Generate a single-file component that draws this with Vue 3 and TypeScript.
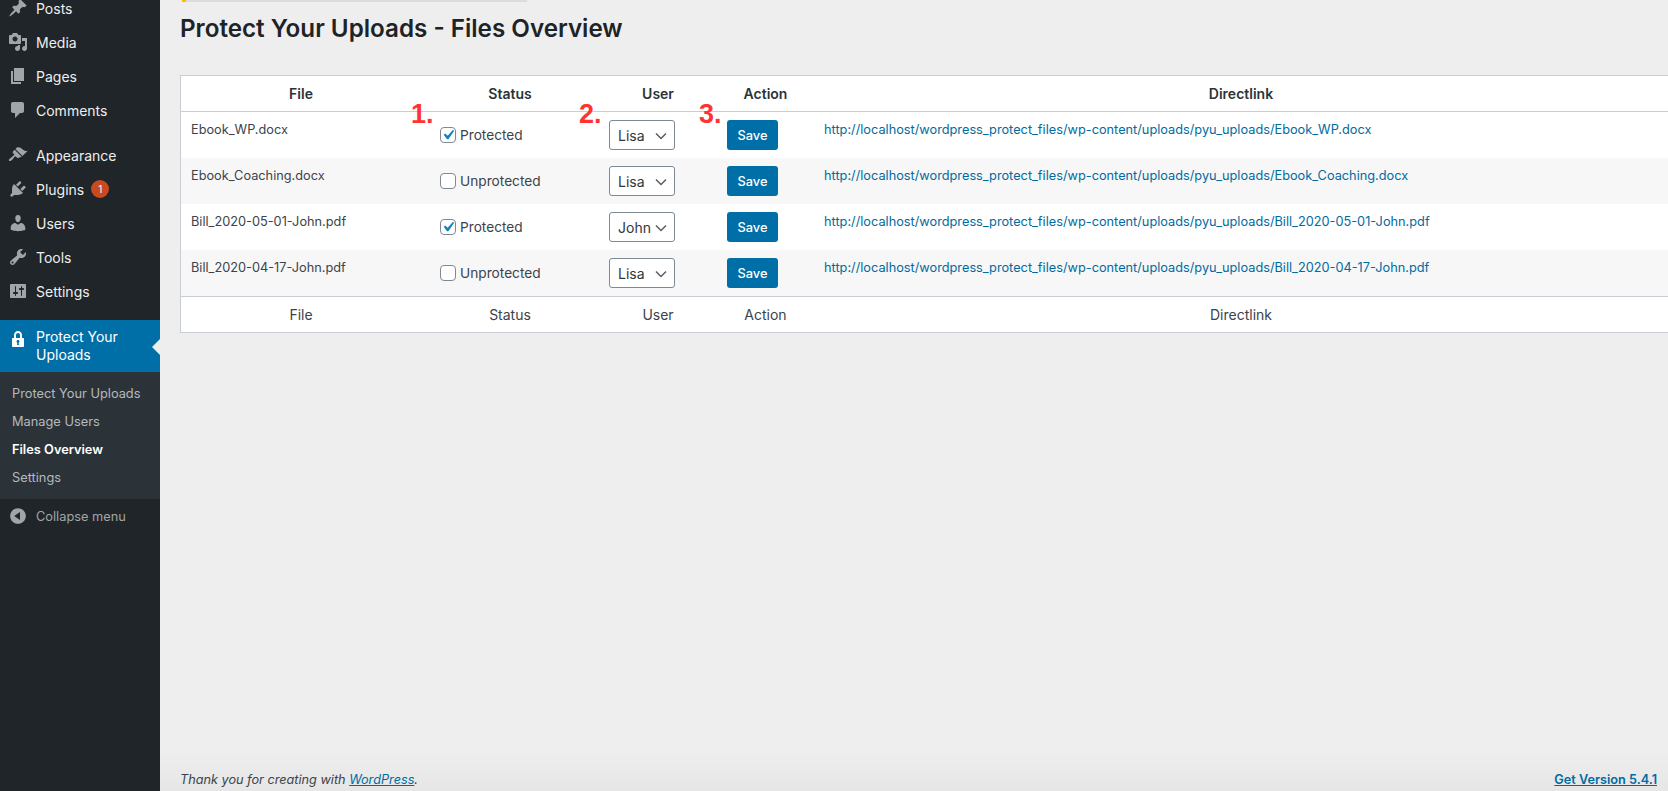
<template>
  <div class="page">
    <aside class="sidebar">
      <ul class="menu">
        <li v-for="item in topItems" :key="item.label" class="menu-item" :class="{ gap: item.gap }">
          <svg class="dash" viewBox="0 0 20 20"><path :d="item.icon" /></svg>
          <span>{{ item.label }}</span>
          <span v-if="item.badge" class="badge">{{ item.badge }}</span>
        </li>
      </ul>
      <div class="current">
        <svg class="dash" viewBox="0 0 20 20"><path :d="lockIcon" /></svg>
        <span>Protect Your Uploads</span>
      </div>
      <ul class="submenu">
        <li v-for="sub in subItems" :key="sub" :class="{ on: sub === 'Files Overview' }">{{ sub }}</li>
      </ul>
      <div class="collapse">
        <svg class="dash" viewBox="0 0 20 20"><path :d="collapseIcon" /></svg>
        <span>Collapse menu</span>
      </div>
    </aside>

    <main class="content">
      <div class="notice"></div>
      <h1>Protect Your Uploads - Files Overview</h1>
      <table class="files">
        <colgroup>
          <col class="c-file" />
          <col class="c-status" />
          <col class="c-user" />
          <col class="c-action" />
          <col />
        </colgroup>
        <thead>
          <tr>
            <th v-for="h in headers" :key="h">{{ h }}</th>
          </tr>
        </thead>
        <tbody>
          <tr v-for="(row, i) in rows" :key="row.file">
            <td>{{ row.file }}</td>
            <td class="status">
              <span v-if="i === 0" class="mark">1.</span>
              <label class="check">
                <span class="box">
                  <svg v-if="row.isProtected" viewBox="0 0 20 20"><path d="M14.83 4.89l1.34.94-5.81 8.38H9.02L5.78 9.67l1.34-1.25 2.57 2.4z" /></svg>
                </span>
                {{ row.isProtected ? 'Protected' : 'Unprotected' }}
              </label>
            </td>
            <td class="user">
              <span v-if="i === 0" class="mark">2.</span>
              <div class="select">
                <select :value="row.user">
                  <option>Lisa</option>
                  <option>John</option>
                </select>
                <svg viewBox="0 0 12 8"><path d="M1 1.5L6 6.5l5-5" /></svg>
              </div>
            </td>
            <td class="action">
              <span v-if="i === 0" class="mark">3.</span>
              <button type="button">Save</button>
            </td>
            <td><a href="#">{{ baseUrl + row.file }}</a></td>
          </tr>
        </tbody>
        <tfoot>
          <tr>
            <th v-for="h in headers" :key="h">{{ h }}</th>
          </tr>
        </tfoot>
      </table>
      <footer class="foot">
        <span class="thanks">Thank you for creating with <a href="#">WordPress</a>.</span>
        <a class="version" href="#">Get Version 5.4.1</a>
      </footer>
    </main>
  </div>
</template>

<script setup lang="ts">
interface MenuItem {
  label: string;
  icon: string;
  gap?: boolean;
  badge?: string;
}

const topItems: MenuItem[] = [
  { label: 'Posts', icon: 'M10.44 3.02l1.82-1.82 6.36 6.35-1.83 1.82c-1.05-.68-2.48-.57-3.41.36l-.75.75c-.92.93-1.04 2.35-.35 3.41l-1.83 1.82-2.41-2.41-2.8 2.79c-.42.42-3.38 2.71-3.8 2.29s1.86-3.39 2.28-3.81l2.79-2.79L4.1 9.36l1.83-1.82c1.05.69 2.48.57 3.4-.36l.75-.75c.93-.92 1.05-2.35.36-3.41z' },
  { label: 'Media', icon: 'M13 11V4c0-.55-.45-1-1-1h-1.67L9 1H5L3.67 3H2c-.55 0-1 .45-1 1v7c0 .55.45 1 1 1h10c.55 0 1-.45 1-1zM7 4.5c1.38 0 2.5 1.12 2.5 2.5S8.38 9.5 7 9.5 4.5 8.38 4.5 7 5.62 4.5 7 4.5zM14 6h5v10.5c0 1.38-1.12 2.5-2.5 2.5S14 17.88 14 16.5s1.12-2.5 2.5-2.5c.17 0 .34.02.5.05V9h-3V6zm-4 8.05V13h2v3.5c0 1.38-1.12 2.5-2.5 2.5S7 17.88 7 16.5 8.12 14 9.5 14c.17 0 .34.02.5.05z' },
  { label: 'Pages', icon: 'M6 15V2h10v13H6zm-1 1h8v2H3V5h2v11z' },
  { label: 'Comments', icon: 'M5 2h9c1.1 0 2 .9 2 2v7c0 1.1-.9 2-2 2h-2l-5 5v-5H5c-1.1 0-2-.9-2-2V4c0-1.1.9-2 2-2z' },
  { label: 'Appearance', gap: true, icon: 'M14.48 11.06L7.41 3.99l1.5-1.5c.5-.56 2.3-.47 3.51.32 1.21.8 1.43 1.28 2.91 2.1 1.18.64 2.45 1.26 4.45.85zm-.71.71L6.7 4.7 4.93 6.47c-.39.39-.39 1.02 0 1.41l1.06 1.06c.39.39.39 1.03 0 1.42-.6.6-1.43 1.11-2.21 1.69-.35.26-.7.53-1.01.84C1.43 13.23.4 14.85 1.02 15.75c.45.67 2.38-.03 3.11-.73.31-.31.58-.66.83-1.02.57-.79 1.08-1.62 1.69-2.23.39-.39 1.02-.39 1.41 0l1.06 1.06c.39.39 1.02.39 1.41 0z' },
  { label: 'Plugins', badge: '1', icon: 'M13.11 4.36L9.87 7.6 8 5.73l3.24-3.24c.35-.34 1.05-.2 1.56.32.52.51.66 1.21.31 1.55zm-8 1.77l.91-1.12 9.01 9.01-1.19.84c-.71.71-2.63 1.16-3.82 1.16H6.14L4.9 17.26c-.59.59-1.54.59-2.12 0-.59-.58-.59-1.53 0-2.12l1.24-1.24v-3.88c0-1.13.4-3.19 1.09-3.89zm7.26 3.97l3.24-3.24c.34-.35 1.04-.21 1.55.31.52.51.66 1.21.31 1.55l-3.24 3.25z' },
  { label: 'Users', icon: 'M10 9.25c-2.27 0-2.73-3.44-2.73-3.44C7 4.02 7.82 2 9.97 2c2.16 0 2.98 2.02 2.71 3.81 0 0-.41 3.44-2.68 3.44zm0 2.57L12.72 10c2.39 0 4.52 2.33 4.52 4.53v2.49s-3.65 1.13-7.24 1.13c-3.65 0-7.24-1.13-7.24-1.13v-2.49c0-2.25 1.94-4.48 4.47-4.48z' },
  { label: 'Tools', icon: 'M16.68 9.77c-1.34 1.34-3.3 1.67-4.95.99l-5.41 6.52c-.99.99-2.59.99-3.58 0s-.99-2.59 0-3.57l6.52-5.42c-.68-1.65-.35-3.61.99-4.95 1.28-1.28 3.12-1.62 4.72-1.06l-2.89 2.89 2.82 2.82 2.86-2.87c.53 1.58.18 3.39-1.08 4.65zM3.81 16.21c.4.39 1.04.39 1.43 0 .4-.4.4-1.04 0-1.43-.39-.4-1.03-.4-1.43 0-.39.39-.39 1.03 0 1.43z' },
  { label: 'Settings', icon: 'M18 16V4c0-.55-.45-1-1-1H3c-.55 0-1 .45-1 1v12c0 .55.45 1 1 1h14c.55 0 1-.45 1-1zM8 11h1c.55 0 1 .45 1 1s-.45 1-1 1H8v1.5c0 .28-.22.5-.5.5s-.5-.22-.5-.5V13H6c-.55 0-1-.45-1-1s.45-1 1-1h1V5.5c0-.28.22-.5.5-.5s.5.22.5.5V11zm5-2h-1c-.55 0-1-.45-1-1s.45-1 1-1h1V5.5c0-.28.22-.5.5-.5s.5.22.5.5V7h1c.55 0 1 .45 1 1s-.45 1-1 1h-1v5.5c0 .28-.22.5-.5.5s-.5-.22-.5-.5V9z' },
];

const lockIcon = 'M14 9h1c.55 0 1 .45 1 1v7c0 .55-.45 1-1 1H5c-.55 0-1-.45-1-1v-7c0-.55.45-1 1-1h1V6c0-2.21 1.79-4 4-4s4 1.79 4 4v3zm-2 0V6c0-1.1-.9-2-2-2s-2 .9-2 2v3h4zm-1 7l-.36-2.15c.51-.24.86-.75.86-1.35 0-.83-.67-1.5-1.5-1.5s-1.5.67-1.5 1.5c0 .6.35 1.11.86 1.35L9 16h2z';
const collapseIcon = 'M10 2.16c4.33 0 7.84 3.51 7.84 7.84s-3.51 7.84-7.84 7.84S2.16 14.33 2.16 10 5.71 2.16 10 2.16zm2 11.72V6.12L6.18 9.97z';

const subItems = ['Protect Your Uploads', 'Manage Users', 'Files Overview', 'Settings'];
const headers = ['File', 'Status', 'User', 'Action', 'Directlink'];
const baseUrl = 'http://localhost/wordpress_protect_files/wp-content/uploads/pyu_uploads/';

const rows = [
  { file: 'Ebook_WP.docx', isProtected: true, user: 'Lisa' },
  { file: 'Ebook_Coaching.docx', isProtected: false, user: 'Lisa' },
  { file: 'Bill_2020-05-01-John.pdf', isProtected: true, user: 'John' },
  { file: 'Bill_2020-04-17-John.pdf', isProtected: false, user: 'Lisa' },
];
</script>

<style>
html,
body {
  margin: 0;
  overflow: hidden;
  background: #eeeeee;
}
</style>

<style scoped>
.page {
  display: flex;
  height: 791px;
  overflow: hidden;
  font-family: Inter, "Liberation Sans", sans-serif;
  color: #3c434a;
}

.sidebar {
  flex: 0 0 160px;
  background: #1f2529;
  color: #eeeeee;
  font-size: 14px;
}

.menu,
.submenu {
  list-style: none;
  margin: 0;
  padding: 0;
}

.menu {
  margin-top: -9px;
}

.menu-item {
  display: flex;
  align-items: center;
  height: 34px;
}

.menu-item.gap {
  margin-top: 11px;
}

.dash {
  flex: none;
  width: 20px;
  height: 20px;
  margin: 0 8px;
  fill: #a0a5aa;
}

.badge {
  width: 18px;
  height: 18px;
  margin-left: 7px;
  border-radius: 50%;
  background: #ca4a1f;
  color: #fff;
  font-size: 10px;
  line-height: 18px;
  text-align: center;
}

.current {
  position: relative;
  display: flex;
  align-items: center;
  height: 52px;
  margin-top: 12px;
  background: #006fa8;
  color: #fff;
  line-height: 18px;
}

.current .dash {
  fill: #fff;
  margin-top: -14px;
}

.current::after {
  content: "";
  position: absolute;
  right: 0;
  top: 19px;
  border: 8px solid transparent;
  border-left-width: 0;
  border-right-color: #eeeeee;
}

.submenu {
  padding: 8px 0 7px 12px;
  background: #2c3338;
  color: #b4b9be;
  font-size: 12.8px;
}

.submenu li {
  height: 28px;
  line-height: 28px;
}

.submenu li.on {
  color: #fff;
  font-weight: 600;
}

.collapse {
  display: flex;
  align-items: center;
  height: 34px;
  color: #a0a5aa;
  font-size: 12.8px;
}

.content {
  flex: 1;
  min-width: 0;
  display: flex;
  flex-direction: column;
  padding-left: 20px;
  background: linear-gradient(#eeeeee 750px, #e6e6e6);
}

.notice {
  width: 345px;
  height: 2px;
  margin-left: 2px;
  box-sizing: border-box;
  border-left: 4px solid #ffb900;
  background: #dcdcdc;
}

h1 {
  margin: 12px 0 31px;
  font-size: 24.2px;
  line-height: 30px;
  font-weight: 600;
  color: #1d2327;
}

.files {
  width: 100%;
  flex: none;
  table-layout: fixed;
  border-collapse: separate;
  border-spacing: 0;
  background: #fff;
  border: 1px solid #c8cdd3;
  border-right: 0;
  font-size: 12.75px;
}

.c-file { width: 240px; }
.c-status { width: 178px; }
.c-user { width: 118px; }
.c-action { width: 97px; }

th {
  height: 35px;
  padding: 0 10px;
  font-size: 14px;
  text-align: center;
}

thead th {
  border-bottom: 1px solid #c8cdd3;
  color: #2c3338;
  font-weight: 600;
}

tfoot th {
  border-top: 1px solid #c8cdd3;
  font-weight: 400;
}

td {
  height: 46px;
  padding: 8px 10px;
  box-sizing: border-box;
  vertical-align: top;
  position: relative;
}

tbody tr:nth-child(even) {
  background: #f7f7f7;
}

td:not(.status, .user, .action) {
  padding-top: 10px;
}

td a {
  color: #006ba1;
  text-decoration: none;
}

.mark {
  position: absolute;
  top: -13px;
  font: 700 27px/30px "Liberation Sans", Arial, sans-serif;
  color: #ff3333;
}

.status .mark { left: -10px; }
.user .mark { left: -20px; }
.action .mark { left: -18px; }

.status { padding-left: 19px; }

.check {
  display: flex;
  align-items: center;
  gap: 4px;
  height: 29px;
  font-size: 13.7px;
}

.box {
  position: relative;
  width: 16px;
  height: 16px;
  box-sizing: border-box;
  border: 1px solid #7e8993;
  border-radius: 4px;
  background: #fff;
}

.box svg {
  position: absolute;
  left: -3px;
  top: -3px;
  width: 20px;
  height: 20px;
  fill: #0f83b8;
}

.select {
  position: relative;
  width: 66px;
}

.select select {
  display: block;
  width: 100%;
  height: 30px;
  padding: 0 0 0 8px;
  box-sizing: border-box;
  appearance: none;
  border: 1px solid #7e8993;
  border-radius: 3px;
  background: #fff;
  color: #32373c;
  font: 14px Inter, "Liberation Sans", sans-serif;
}

.select svg {
  position: absolute;
  right: 8px;
  top: 12px;
  width: 12px;
  height: 8px;
  fill: none;
  stroke: #555d66;
  stroke-width: 1.5;
  pointer-events: none;
}

.action button {
  display: block;
  width: 51px;
  height: 30px;
  padding: 0;
  border: 0;
  border-radius: 3px;
  background: #006fa8;
  color: #fff;
  font: 500 12.8px Inter, "Liberation Sans", sans-serif;
}

.foot {
  display: flex;
  justify-content: space-between;
  align-items: center;
  margin-top: auto;
  height: 24px;
  padding: 0 11px 0 0;
  box-sizing: border-box;
  font-size: 12.7px;
}

.thanks {
  font-style: italic;
}

.foot a {
  color: #006ba1;
}

.version {
  font-weight: 600;
}
</style>
